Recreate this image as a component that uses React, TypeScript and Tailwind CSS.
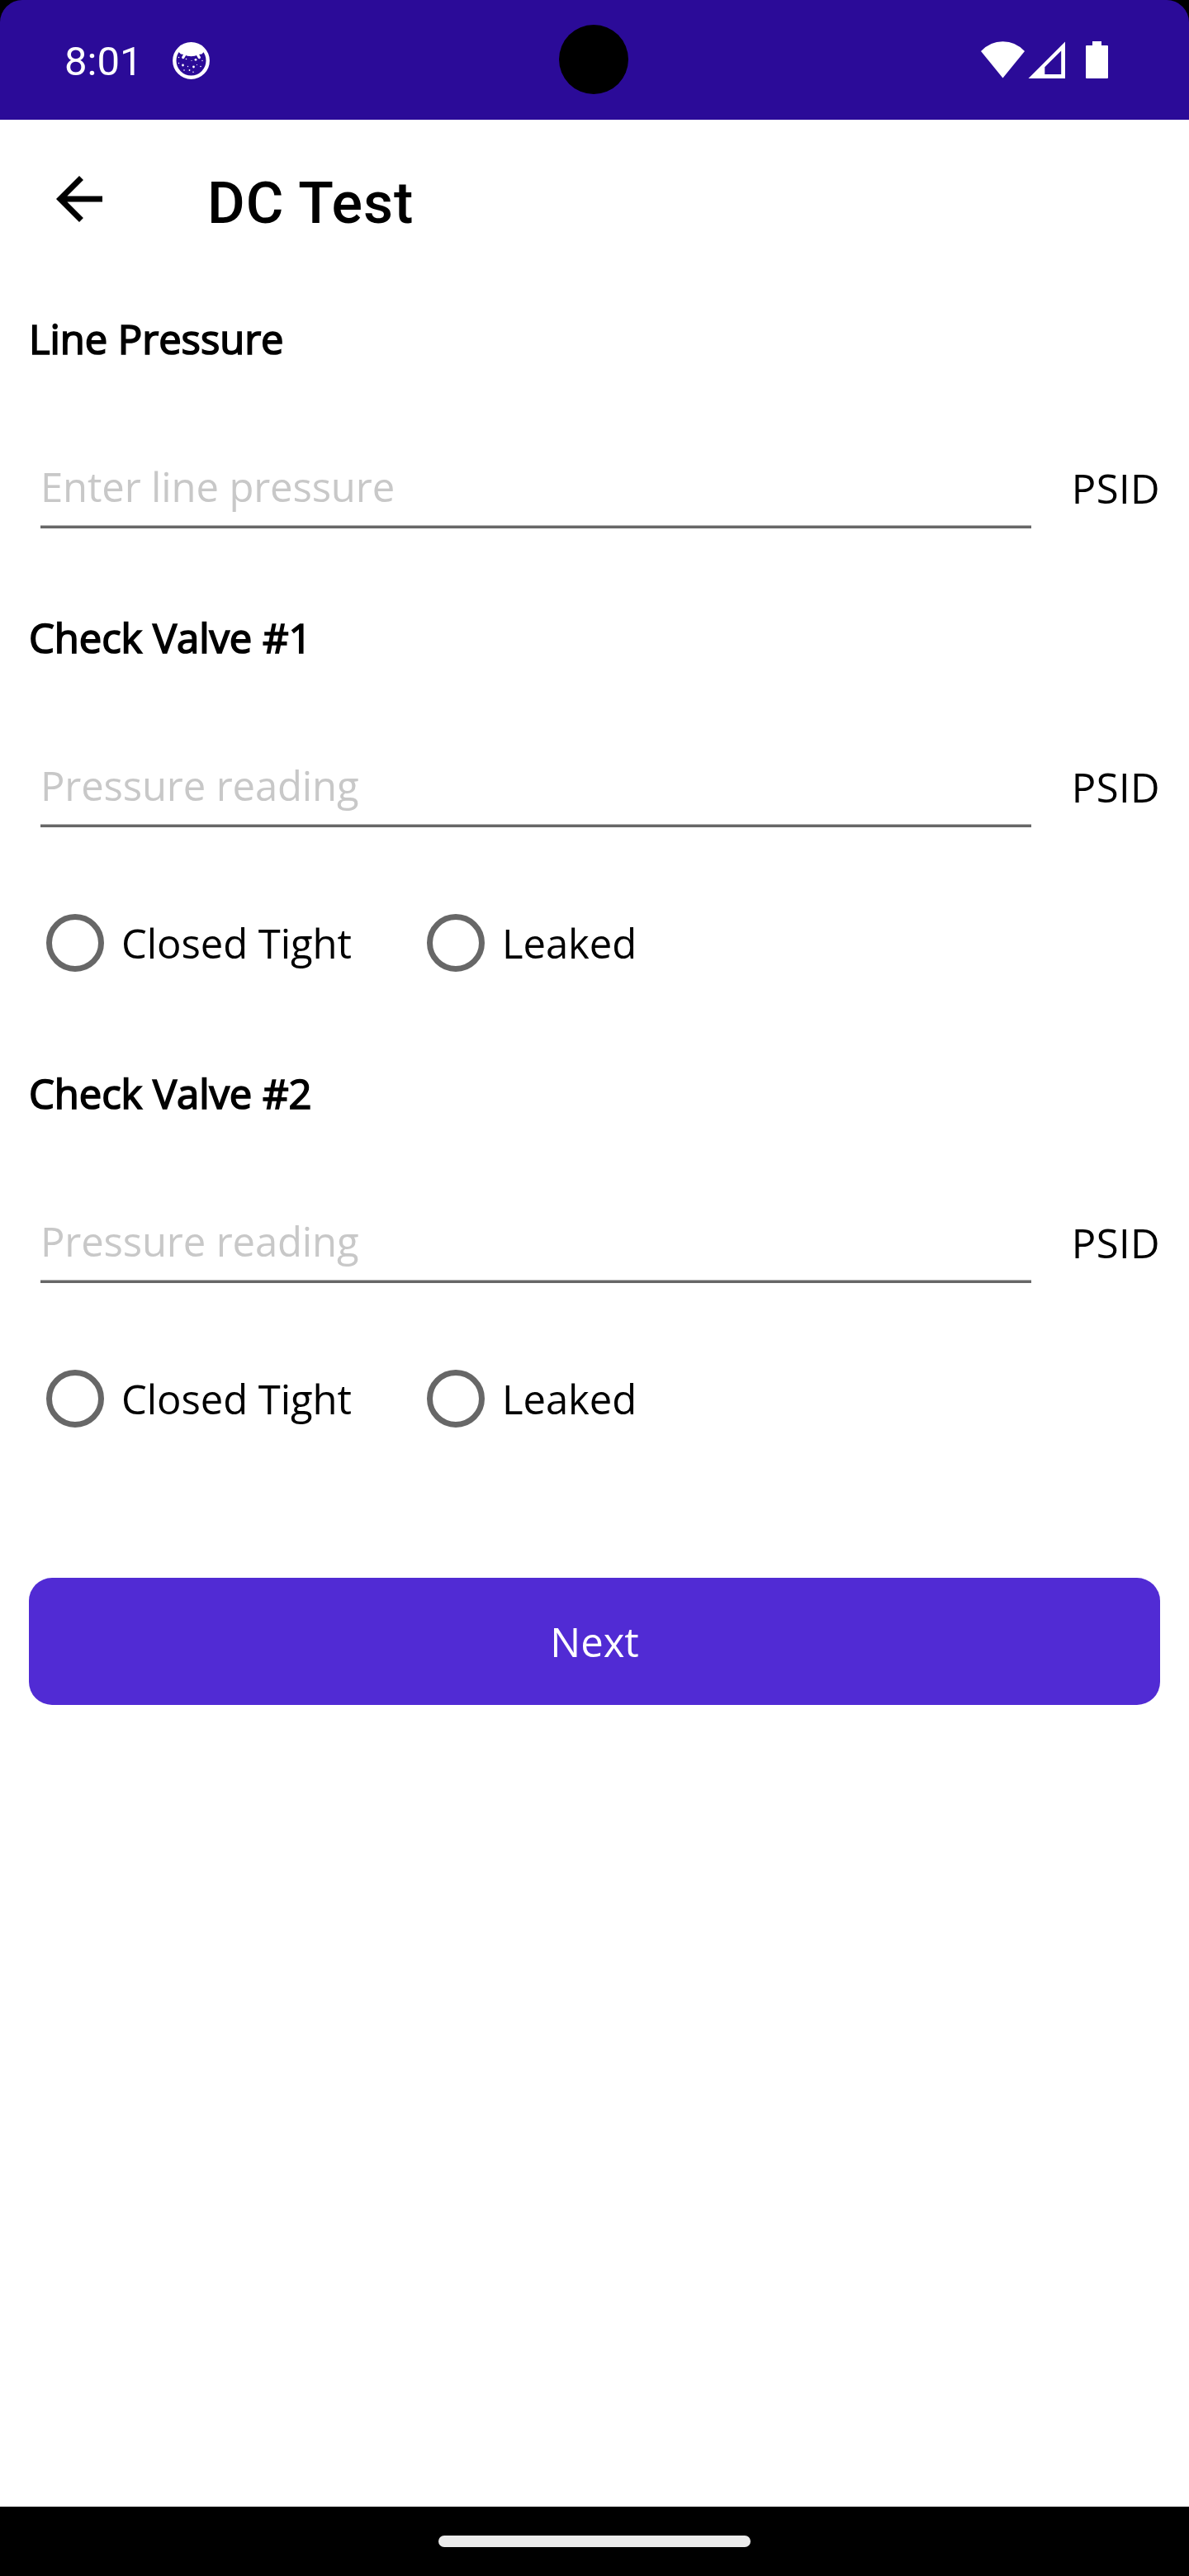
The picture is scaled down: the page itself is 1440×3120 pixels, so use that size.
import React from "react";

function Radio({ label, className }: { label: string; className?: string }) {
  return (
    <label className={`flex items-center gap-[21px] ${className ?? ""}`}>
      <span className="size-[70px] shrink-0 rounded-full border-[7px] border-[#676767]" />
      <span className="tracking-[-0.08px]">{label}</span>
    </label>
  );
}

interface SectionProps {
  title: string;
  placeholder: string;
  radios?: boolean;
  className?: string;
}

function Section({ title, placeholder, radios, className }: SectionProps) {
  return (
    <section className={className}>
      <h2 className="h-[66px] pl-[35px] tracking-[-0.08px] [-webkit-text-stroke:1.7px_black]">{title}</h2>
      <div className="mt-[113px] flex pr-[35px]">
        <div className="ml-[49px] flex h-[84px] w-[1200px] flex-col justify-between text-[#c8c8c8]">
          <span className="tracking-[-0.15px]">{placeholder}</span>
          <span className="h-1 border-t border-[#b0b0b0] bg-[#676767]" />
        </div>
        <span className="mt-[2px] ml-auto tracking-[0.4px]">PSID</span>
      </div>
      {radios && (
        <div className="mt-[105px] flex pl-[56px]">
          <Radio label="Closed Tight" className="w-[461px]" />
          <Radio label="Leaked" />
        </div>
      )}
    </section>
  );
}

export default function App() {
  return (
    <div className="flex h-[3120px] w-[1440px] flex-col bg-black font-['Open_Sans',sans-serif] text-[49px] leading-[66px] whitespace-nowrap text-black">
      <header className="relative flex h-[145px] items-start rounded-t-[27px] bg-[#2b0b98] text-white">
        <span className="mt-[42px] ml-[78px] w-[131px] font-[Roboto,sans-serif]">8:01</span>
        <svg className="mt-[51px]" width="45" height="45" viewBox="0 0 45 45" fill="white">
          <circle cx="22.5" cy="22.5" r="20.2" fill="none" stroke="white" strokeWidth="4.4" />
          <path d="M6.500 11Q22.500-8 38.500 11L35.500 14.500L31.500 15Q22.500 19.500 13.500 15L10 14.500Z" />
          <path d="M15.500 14L12.800 18.500M29.700 14L32.300 18.500" stroke="white" strokeWidth="3.400" strokeLinecap="round" />
          <circle cx="28" cy="21.300" r="1.400" /><circle cx="12.500" cy="28" r="1.400" /><circle cx="25.500" cy="30" r="1.400" />
          <circle cx="7.500" cy="18.500" r=".8" /><circle cx="16.500" cy="20.500" r=".8" /><circle cx="23" cy="22.500" r=".6" />
          <circle cx="36" cy="22.500" r=".7" /><circle cx="7.500" cy="25.500" r=".7" /><circle cx="18.500" cy="29.500" r=".7" />
          <circle cx="29.500" cy="27.500" r=".6" /><circle cx="34" cy="29.500" r=".8" /><circle cx="14" cy="34" r=".8" />
          <circle cx="20.500" cy="34" r=".9" /><circle cx="25" cy="36.300" r=".8" />
        </svg>
        <span className="absolute top-[30px] left-[677px] size-[84px] rounded-full bg-black" />
        <svg className="mt-[50px] mr-[97px] ml-auto" width="155" height="46" viewBox="0 0 155 46" fill="white">
          <path d="M0 12Q11 .2 26.500 .2T53 12L26.500 44.500Z" />
          <path fillRule="evenodd" d="M102 .5V45H57.500ZM97.200 11.500L77.300 31.200V40H97.200Z" />
          <path d="M135 0h11v5h7a1 1 0 0 1 1 1v38a1 1 0 0 1-1 1h-25a1 1 0 0 1-1-1V6a1 1 0 0 1 1-1h7Z" />
        </svg>
      </header>
      <main className="flex-1 bg-white">
        <div className="flex h-[232px] items-start">
          <svg className="mt-[54px] ml-[54px]" width="84" height="84" viewBox="0 0 24 24">
            <path d="M20 11H7.830l5.590-5.590L12 4l-8 8 8 8 1.410-1.410L7.830 13H20v-2z" />
          </svg>
          <h1 className="mt-[61px] ml-[113px] font-[Roboto,sans-serif] text-[70px] leading-[80px] font-medium tracking-[1px]">DC Test</h1>
        </div>
        <Section title="Line Pressure" placeholder="Enter line pressure" />
        <Section title="Check Valve #1" placeholder="Pressure reading" radios className="mt-[99px]" />
        <Section title="Check Valve #2" placeholder="Pressure reading" radios className="mt-[114px]" />
        <button className="mx-[35px] mt-[182px] block h-[154px] w-[1370px] rounded-[28px] bg-[#512bd4] text-white">Next</button>
      </main>
      <footer className="flex h-[84px] justify-center pt-[35px]">
        <span className="h-[14px] w-[378px] rounded-full bg-[#ebebeb]" />
      </footer>
    </div>
  );
}
